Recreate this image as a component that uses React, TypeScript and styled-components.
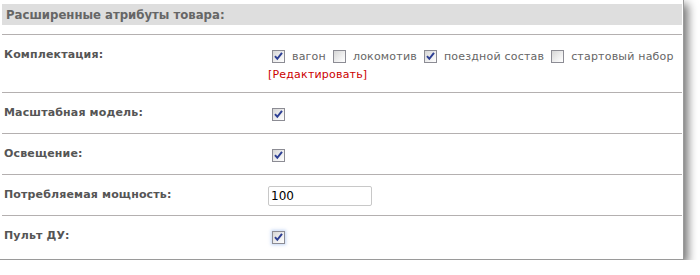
import styled, { createGlobalStyle } from 'styled-components'

const GlobalStyle = createGlobalStyle`
  html, body {
    margin: 0;
    padding: 0;
    background: #ffffff;
  }
  body {
    font-family: "DejaVu Sans", Verdana, sans-serif;
  }
`

type Choice = { label: string; checked: boolean }

const sets: Choice[] = [
  { label: 'вагон', checked: true },
  { label: 'локомотив', checked: false },
  { label: 'поездной состав', checked: true },
  { label: 'стартовый набор', checked: false },
]

function Check({ checked, focused }: { checked: boolean; focused?: boolean }) {
  return (
    <Box $focused={focused}>
      {checked && (
        <svg width="9" height="9" viewBox="0 0 9 9">
          <path d="M1 4.2 L3.3 6.8 L8 0.8" fill="none" stroke="#2d3f94" strokeWidth="2" />
        </svg>
      )}
    </Box>
  )
}

export default function App() {
  return (
    <>
      <GlobalStyle />
      <Panel>
        <Header>Расширенные атрибуты товара:</Header>
        <Row>
          <Label>Комплектация:</Label>
          <Value>
            <Line>
              {sets.map((s) => (
                <Option key={s.label}>
                  <Check checked={s.checked} />
                  <OptionText>{s.label}</OptionText>
                </Option>
              ))}
            </Line>
            <Line>
              <EditLink>[Редактировать]</EditLink>
            </Line>
          </Value>
        </Row>
        <Row>
          <Label>Масштабная модель:</Label>
          <Value>
            <Line>
              <Check checked />
            </Line>
          </Value>
        </Row>
        <Row>
          <Label>Освещение:</Label>
          <Value>
            <Line>
              <Check checked />
            </Line>
          </Value>
        </Row>
        <Row>
          <Label>Потребляемая мощность:</Label>
          <Value>
            <Line>
              <NumberInput defaultValue="100" />
            </Line>
          </Value>
        </Row>
        <Row>
          <Label>Пульт ДУ:</Label>
          <Value>
            <Line>
              <Check checked focused />
            </Line>
          </Value>
        </Row>
      </Panel>
    </>
  )
}

const Panel = styled.div`
  width: 684px;
  box-sizing: border-box;
  padding: 4px 1px 3px 2px;
  background: #ffffff;
  border-right: 1px solid #9a9a9a;
  border-bottom: 1px solid #9a9a9a;
  box-shadow: 4px 4px 9px rgba(0, 0, 0, 0.55);
`

const Header = styled.div`
  height: 21px;
  line-height: 21px;
  padding-left: 4px;
  margin-bottom: 9px;
  background: #dedede;
  color: #666666;
  font-family: "DejaVu Sans Condensed", "DejaVu Sans", sans-serif;
  font-size: 13px;
  font-weight: bold;
`

const Row = styled.div`
  display: grid;
  grid-template-columns: 266px 1fr;
  min-height: 41px;
  box-sizing: border-box;
  padding: 12px 0 9px;
  border-top: 1px solid #b4b0b0;
`

const Label = styled.div`
  padding-left: 2px;
  line-height: 15px;
  font-size: 11px;
  font-weight: bold;
  letter-spacing: 0.15px;
  color: #555555;
`

const Value = styled.div`
  display: flex;
  flex-direction: column;
`

const Line = styled.div`
  display: flex;
  align-items: center;
  height: 18px;
`

const Option = styled.span`
  display: inline-flex;
  align-items: center;
  margin-right: 3px;
`

const Box = styled.span<{ $focused?: boolean }>`
  display: inline-flex;
  align-items: center;
  justify-content: center;
  width: 13px;
  height: 13px;
  box-sizing: border-box;
  margin: 0 7px 0 4px;
  border: 1px solid #8c8c94;
  background: linear-gradient(135deg, #d6d6d6 0%, #f0f0f0 60%, #ffffff 100%);
  box-shadow: ${(p) => (p.$focused ? '0 0 3px 1px rgba(120, 160, 230, 0.45)' : 'none')};
`

const OptionText = styled.span`
  font-size: 11px;
  letter-spacing: 0.2px;
  color: #666666;
`

const EditLink = styled.a`
  font-size: 11px;
  letter-spacing: 0.2px;
  color: #cc0000;
  text-decoration: none;
  cursor: pointer;
`

const NumberInput = styled.input`
  width: 104px;
  height: 20px;
  box-sizing: border-box;
  margin: 0;
  padding: 0 2px;
  border: 1px solid #c8c8c8;
  border-radius: 2px;
  font-family: "DejaVu Sans", Verdana, sans-serif;
  font-size: 12px;
  color: #000000;
  outline: none;
`
